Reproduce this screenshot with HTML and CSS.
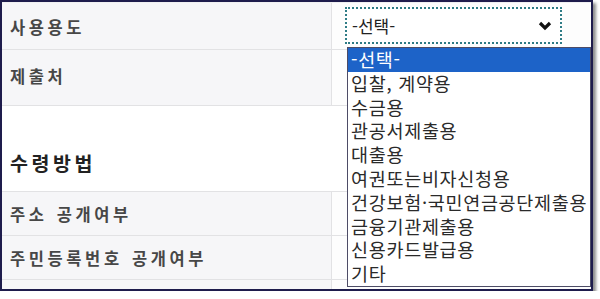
FILE: index.html
```html
<!DOCTYPE html>
<html lang="ko">
<head>
<meta charset="utf-8">
<link rel="stylesheet" href="styles.css">
</head>
<body>
<div class="frame">
  <div class="row r1">
    <div class="label">사용용도</div>
    <div class="value">
      <div class="select">
        <span>-선택-</span>
        <svg class="chev" width="14" height="10" viewBox="0 0 14 10"><polyline points="2,2 7,7 12,2" fill="none" stroke="#111" stroke-width="3.2"/></svg>
      </div>
    </div>
  </div>
  <div class="row r2">
    <div class="label">제출처</div>
    <div class="value"></div>
  </div>
  <div class="row r3">
    <div class="heading">수령방법</div>
  </div>
  <div class="row r4">
    <div class="label">주소 공개여부</div>
    <div class="value"></div>
  </div>
  <div class="row r5">
    <div class="label">주민등록번호 공개여부</div>
    <div class="value"></div>
  </div>
  <div class="row r6">
    <div class="label"></div>
    <div class="value"></div>
  </div>
  <ul class="dropdown">
    <li class="sel">-선택-</li>
    <li>입찰, 계약용</li>
    <li>수금용</li>
    <li>관공서제출용</li>
    <li>대출용</li>
    <li>여권또는비자신청용</li>
    <li>건강보험·국민연금공단제출용</li>
    <li>금융기관제출용</li>
    <li>신용카드발급용</li>
    <li>기타</li>
  </ul>
</div>
</body>
</html>
```
FILE: styles.css
```css
html, body {
  margin: 0;
  padding: 0;
  background: #fff;
}
body {
  font-family: "Noto Sans CJK KR", "Noto Sans", sans-serif;
}
.frame {
  position: relative;
  width: 589px;
  height: 287px;
  border: 2px solid #1e1c4c;
  box-shadow: 3px 3px 3px rgba(0, 0, 0, 0.45);
  overflow: hidden;
  background: #fff;
}
.row {
  display: flex;
  border-bottom: 1px solid #e2e2e4;
  box-sizing: border-box;
}
.label {
  width: 330px;
  box-sizing: border-box;
  background: #f6f6f8;
  border-right: 1px solid #e2e2e4;
  padding-left: 8px;
  display: flex;
  align-items: center;
  font-size: 16.5px;
  font-weight: 700;
  color: #474747;
  letter-spacing: 3.6px;
  word-spacing: 1px;
}
.value {
  flex: 1;
  background: #fdfdfd;
}
.r1 { height: 48px; border-top: 1px solid #f0f0f2; }
.r2 { height: 56px; }
.r3 { height: 86px; background: #fff; }
.r4 { height: 44px; }
.r5 { height: 44px; }
.r6 { height: 20px; border-bottom: none; }
.r1 .label { padding-top: 1px; }
.r2 .label { padding-bottom: 3px; }
.heading {
  padding: 42px 0 0 8px;
  font-size: 19.5px;
  font-weight: 700;
  color: #222;
  letter-spacing: 3.6px;
}
.r1 .value {
  padding: 4px 0 0 13px;
}
.select {
  width: 217px;
  height: 37px;
  box-sizing: border-box;
  border: 2px dotted #2f7c86;
  background: #fff;
  display: flex;
  align-items: center;
  justify-content: space-between;
  padding: 0 8px 0 5px;
  font-size: 17px;
  color: #222;
}
.dropdown {
  position: absolute;
  left: 345px;
  top: 45px;
  width: 244px;
  margin: 0;
  padding: 0;
  list-style: none;
  background: #fff;
  border: 1px solid #4d4c66;
  box-sizing: border-box;
}
.dropdown li {
  height: 23.8px;
  line-height: 23.8px;
  padding-left: 3px;
  font-size: 18.5px;
  letter-spacing: 0.7px;
  color: #2a2a2a;
  white-space: nowrap;
}
.dropdown li.sel {
  background: #1d63c8;
  color: #fff;
}
```
